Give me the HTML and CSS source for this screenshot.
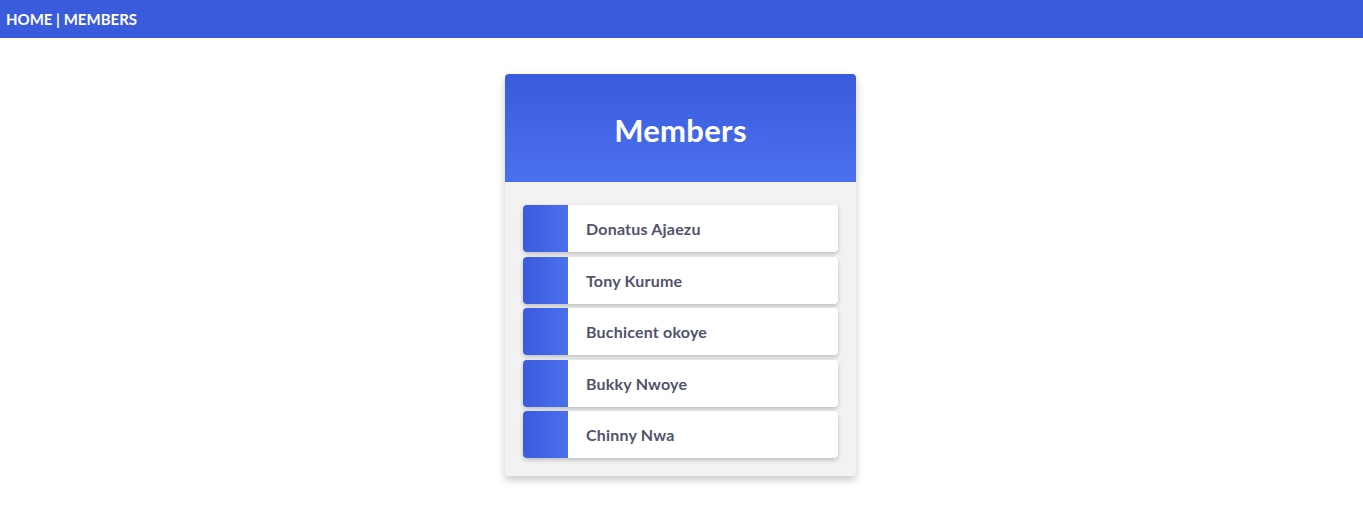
FILE: index.html
```html
<!DOCTYPE html>
<html>
<head>
<meta charset="utf-8">
<link rel="stylesheet" href="styles.css">
</head>
<body>
<nav class="nav">HOME | MEMBERS</nav>
<main class="main">
  <section class="card">
    <header class="card-head"><h1>Members</h1></header>
    <ul class="list">
      <li class="item"><span class="accent"></span><span class="name">Donatus Ajaezu</span></li>
      <li class="item"><span class="accent"></span><span class="name">Tony Kurume</span></li>
      <li class="item"><span class="accent"></span><span class="name">Buchicent okoye</span></li>
      <li class="item"><span class="accent"></span><span class="name">Bukky Nwoye</span></li>
      <li class="item"><span class="accent"></span><span class="name">Chinny Nwa</span></li>
    </ul>
  </section>
</main>
</body>
</html>
```
FILE: styles.css
```css
* { box-sizing: border-box; }
body {
  margin: 0;
  font-family: "Lato", "Open Sans", sans-serif;
  background: #fff;
}
.nav {
  height: 38px;
  background: #3a5bdc;
  color: #fff;
  font-weight: 700;
  font-size: 15px;
  line-height: 38px;
  padding-left: 6px;
}
.main {
  display: flex;
  justify-content: center;
  align-items: flex-start;
  padding: 36px 2px 40px 0;
}
.card {
  width: 351px;
  background: #f2f2f2;
  border-radius: 4px;
  overflow: hidden;
  box-shadow: 0 4px 8px rgba(0,0,0,0.22);
}
.card-head {
  height: 108px;
  padding-top: 3px;
  background: linear-gradient(to bottom, #3a5bdc, #4b70ee);
  display: flex;
  align-items: center;
  justify-content: center;
}
.card-head h1 {
  margin: 0;
  color: #fff;
  font-size: 31px;
  font-weight: 700;
  letter-spacing: 0.3px;
}
.list {
  list-style: none;
  margin: 0;
  padding: 23px 18px 18px;
  display: flex;
  flex-direction: column;
  gap: 4.5px;
}
.item {
  height: 47px;
  display: flex;
  align-items: center;
  background: #fff;
  border-radius: 4px;
  overflow: hidden;
  box-shadow: 0 2px 4px rgba(0,0,0,0.22);
}
.accent {
  width: 45px;
  align-self: stretch;
  background: linear-gradient(to right, #3a5bdc, #4b70ee);
}
.name {
  padding-left: 18px;
  color: #50536a;
  font-size: 16px;
  font-weight: 700;
  letter-spacing: 0.2px;
}
```
